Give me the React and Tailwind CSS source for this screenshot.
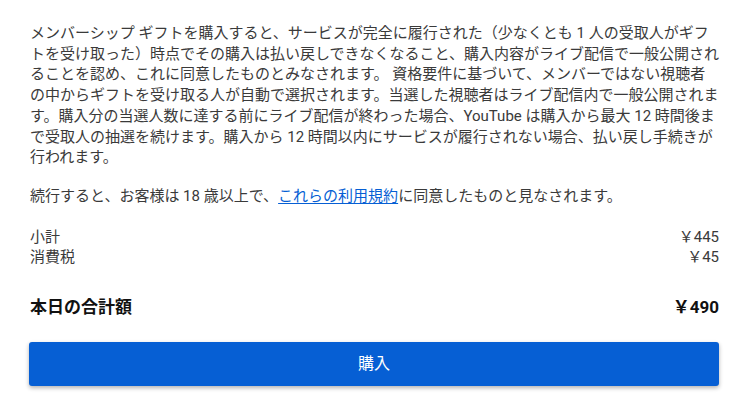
export default function App() {
  const font = { fontFamily: 'Roboto, "Noto Sans CJK JP", sans-serif' };
  return (
    <div className="w-[741px] h-[414px] bg-white overflow-hidden pl-[30px] pr-[22px] pt-[23px] text-[#3a3a3a]" style={font}>
      <p className="text-[15px] leading-[20.7px]">
        メンバーシップ ギフトを購入すると、サービスが完全に履行された（少なくとも 1 人の受取人がギフ<br />
        トを受け取った）時点でその購入は払い戻しできなくなること、購入内容がライブ配信で一般公開され<br />
        ることを認め、これに同意したものとみなされます。 資格要件に基づいて、メンバーではない視聴者<br />
        の中からギフトを受け取る人が自動で選択されます。当選した視聴者はライブ配信内で一般公開されま<br />
        す。購入分の当選人数に達する前にライブ配信が終わった場合、YouTube は購入から最大 12 時間後ま<br />
        で受取人の抽選を続けます。購入から 12 時間以内にサービスが履行されない場合、払い戻し手続きが<br />
        行われます。
      </p>
      <p className="mt-[18px] text-[15px] leading-[20.7px]">
        続行すると、お客様は 18 歳以上で、<span className="text-[#065fd4] underline underline-offset-2">これらの利用規約</span>に同意したものと見なされます。
      </p>
      <div className="mt-[20px] flex flex-col text-[15px] leading-[20px]">
        <div className="flex justify-between"><span>小計</span><span>￥445</span></div>
        <div className="flex justify-between"><span>消費税</span><span>￥45</span></div>
      </div>
      <div className="mt-[28px] flex justify-between text-[17px] leading-[24px] font-bold text-[#111]">
        <span>本日の合計額</span><span>￥490</span>
      </div>
      <button className="mt-[23px] w-[690px] h-[44px] ml-[-1px] rounded-[3px] bg-[#065fd4] text-white text-[16px] shadow-[0_2px_4px_rgba(0,0,0,0.3)] flex items-center justify-center">
        購入
      </button>
    </div>
  );
}
